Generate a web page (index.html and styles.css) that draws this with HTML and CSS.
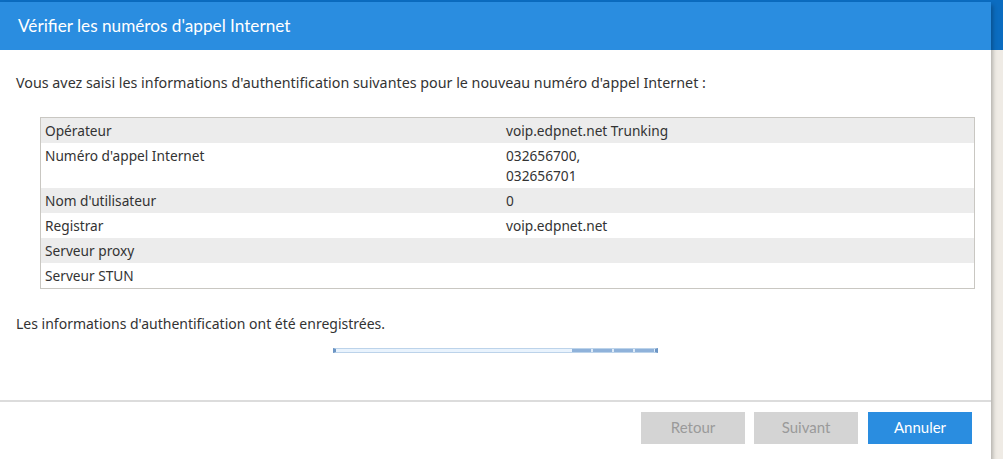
FILE: index.html
```html
<!DOCTYPE html>
<html lang="fr">
<head>
    <meta charset="UTF-8">
    <title>Vérifier les numéros d'appel Internet</title>
    <link rel="stylesheet" href="styles.css">
</head>
<body>
    <div class="dialog">
        <div class="dialog-header">Vérifier les numéros d'appel Internet</div>
        <div class="dialog-body">
            <p class="intro">Vous avez saisi les informations d'authentification suivantes pour le nouveau numéro d'appel Internet :</p>
            <table class="summary">
                <tr><td>Opérateur</td><td>voip.edpnet.net Trunking</td></tr>
                <tr><td>Numéro d'appel Internet</td><td>032656700,<br>032656701</td></tr>
                <tr><td>Nom d'utilisateur</td><td>0</td></tr>
                <tr><td>Registrar</td><td>voip.edpnet.net</td></tr>
                <tr><td>Serveur proxy</td><td></td></tr>
                <tr><td>Serveur STUN</td><td></td></tr>
            </table>
            <p class="saved">Les informations d'authentification ont été enregistrées.</p>
            <div class="progress"><div class="progress-dots"></div></div>
        </div>
        <div class="dialog-footer">
            <button class="button" disabled>Retour</button>
            <button class="button" disabled>Suivant</button>
            <button class="button primary">Annuler</button>
        </div>
    </div>
</body>
</html>
```
FILE: styles.css
```css
body {
    margin: 0;
    background: linear-gradient(#0b6cc0 0, #0b6cc0 50px, #efebe5 50px);
    font-family: "Noto Sans", "Liberation Sans", sans-serif;
    font-size: 14px;
    color: #333;
    height: 459px;
}
.dialog {
    width: 991px;
    margin-top: 2px;
    background: white;
    box-shadow: 2px 3px 4px rgba(0, 0, 0, 0.25);
}
.dialog-header {
    background-color: #2a8de0;
    color: white;
    font-family: "Lato", sans-serif;
    font-size: 17.2px;
    height: 48px;
    line-height: 48px;
    padding-left: 18px;
}
.dialog-body {
    padding: 23px 16px 0 16px;
    height: 327px;
}
.intro {
    margin: 0 0 24px 0;
    line-height: 20px;
    font-size: 14.3px;
}
.summary {
    margin-left: 24px;
    width: 935px;
    border: 1px solid #c9c7c2;
    border-collapse: collapse;
    font-size: 13.7px;
}
.summary td {
    vertical-align: top;
    padding: 3px 4px 2px 4px;
    line-height: 20px;
}
.summary td:first-child {
    width: 453px;
}
.summary tr:nth-child(odd) {
    background-color: #ececec;
}
.saved {
    margin: 25px 0 0 0;
    line-height: 20px;
}
.progress {
    margin: 14px 0 0 317px;
    width: 319px;
    height: 3px;
    border: 1px solid #bcd3ea;
    border-left: 3px solid #6c95c4;
    border-right: 3px solid #6c95c4;
    background: #e9f3fd;
    position: relative;
}
.progress-dots {
    position: absolute;
    left: 236px;
    right: 0;
    top: 0;
    height: 3px;
    background: repeating-linear-gradient(to right, #8fb2da 0, #8fb2da 19px, #dbe9f7 19px, #dbe9f7 21px);
}
.dialog-footer {
    border-top: 2px solid #dcdcdc;
    height: 50px;
    display: flex;
    justify-content: flex-end;
    align-items: flex-start;
    padding-top: 10px;
    padding-right: 19px;
    gap: 9px;
}
.button {
    width: 104px;
    height: 32px;
    border: none;
    padding: 0 0 3px 0;
    font-family: "Lato", sans-serif;
    font-size: 15px;
    background-color: #d4d4d4;
    color: #9a9a9a;
}
.button.primary {
    background-color: #2a8de0;
    color: white;
    margin-left: 1px;
}
```
